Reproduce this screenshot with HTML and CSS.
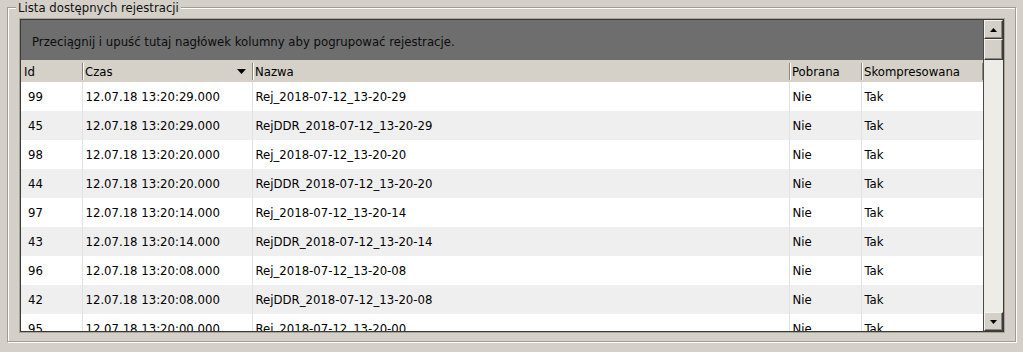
FILE: index.html
```html
<!DOCTYPE html>
<html lang="pl">
<head>
    <meta charset="UTF-8">
    <title>Lista dostępnych rejestracji</title>
    <link rel="stylesheet" href="styles.css">
</head>
<body>
    <fieldset class="recordings">
        <legend>Lista dostępnych rejestracji</legend>
        <div class="grid">
            <div class="grid-main">
                <div class="group-panel">Przeciągnij i upuść tutaj nagłówek kolumny aby pogrupować rejestracje.</div>
                <table class="records">
                    <colgroup>
                        <col class="col-id">
                        <col class="col-time">
                        <col class="col-name">
                        <col class="col-fetched">
                        <col>
                    </colgroup>
                    <thead>
                        <tr>
                            <th>Id</th>
                            <th class="sorted">Czas
                                <svg class="sort-arrow" width="9" height="5" viewBox="0 0 9 5"><path d="M0 0H9L4.5 5Z"/></svg>
                            </th>
                            <th>Nazwa</th>
                            <th>Pobrana</th>
                            <th>Skompresowana</th>
                        </tr>
                    </thead>
                    <tbody>
                        <tr><td class="id">99</td><td>12.07.18 13:20:29.000</td><td>Rej_2018-07-12_13-20-29</td><td>Nie</td><td>Tak</td></tr>
                        <tr><td class="id">45</td><td>12.07.18 13:20:29.000</td><td>RejDDR_2018-07-12_13-20-29</td><td>Nie</td><td>Tak</td></tr>
                        <tr><td class="id">98</td><td>12.07.18 13:20:20.000</td><td>Rej_2018-07-12_13-20-20</td><td>Nie</td><td>Tak</td></tr>
                        <tr><td class="id">44</td><td>12.07.18 13:20:20.000</td><td>RejDDR_2018-07-12_13-20-20</td><td>Nie</td><td>Tak</td></tr>
                        <tr><td class="id">97</td><td>12.07.18 13:20:14.000</td><td>Rej_2018-07-12_13-20-14</td><td>Nie</td><td>Tak</td></tr>
                        <tr><td class="id">43</td><td>12.07.18 13:20:14.000</td><td>RejDDR_2018-07-12_13-20-14</td><td>Nie</td><td>Tak</td></tr>
                        <tr><td class="id">96</td><td>12.07.18 13:20:08.000</td><td>Rej_2018-07-12_13-20-08</td><td>Nie</td><td>Tak</td></tr>
                        <tr><td class="id">42</td><td>12.07.18 13:20:08.000</td><td>RejDDR_2018-07-12_13-20-08</td><td>Nie</td><td>Tak</td></tr>
                        <tr><td class="id">95</td><td>12.07.18 13:20:00.000</td><td>Rej_2018-07-12_13-20-00</td><td>Nie</td><td>Tak</td></tr>
                    </tbody>
                </table>
            </div>
            <div class="scrollbar">
                <div class="scroll-btn">
                    <svg width="7" height="4" viewBox="0 0 7 4"><path d="M0 4H7L3.5 0Z"/></svg>
                </div>
                <div class="scroll-thumb"></div>
                <div class="scroll-track"></div>
                <div class="scroll-btn">
                    <svg width="7" height="4" viewBox="0 0 7 4"><path d="M0 0H7L3.5 4Z"/></svg>
                </div>
            </div>
        </div>
    </fieldset>
</body>
</html>
```

FILE: styles.css
```css
html, body {
    margin: 0;
    height: 352px;
    overflow: hidden;
}
body {
    background: #d4d0c8;
    font-family: "DejaVu Sans Condensed", "DejaVu Sans", sans-serif;
    font-size: 13px;
    color: #000;
}
.recordings {
    margin: 0 7px;
    padding: 4px 11px 9px 12px;
    min-width: 0;
    border: 1px solid #a09d95;
    box-shadow: 1px 1px 0 #fff, inset 1px 1px 0 #fff;
}
.recordings legend {
    margin-left: -4px;
    padding: 0 2px;
    line-height: 15px;
    background: #d4d0c8;
    color: #111;
}
.grid {
    display: flex;
    height: 311px;
    border: 1px solid #3a3a3a;
    box-shadow: 0 0 0 1px #a8a49c;
    background: #fff;
}
.grid-main {
    flex: 1;
    overflow: hidden;
    min-width: 0;
}
.group-panel {
    height: 40px;
    line-height: 44px;
    padding-left: 11px;
    background: #6e6e6e;
    color: #0c0c0c;
    white-space: nowrap;
}
.records {
    width: 100%;
    table-layout: fixed;
    border-collapse: collapse;
}
.col-id { width: 61px; }
.col-time { width: 170px; }
.col-name { width: 537px; }
.col-fetched { width: 72px; }
.records th {
    position: relative;
    height: 22px;
    padding: 0 0 0 3px;
    background: #d5d1c9;
    font-weight: normal;
    text-align: left;
    white-space: nowrap;
}
.records th + th::before,
.records th:last-child::after {
    content: "";
    position: absolute;
    left: 0;
    top: 3px;
    bottom: 2px;
    width: 1px;
    background: #8a877f;
    box-shadow: 1px 0 0 #fff;
}
.records th:last-child::after {
    left: auto;
    right: 0;
}
.sort-arrow {
    position: absolute;
    right: 6px;
    top: 9px;
}
.records td {
    height: 29px;
    padding: 0 0 0 3px;
    border-left: 1px solid #e2e2e2;
    white-space: nowrap;
    overflow: hidden;
}
.records td:first-child {
    border-left: none;
}
.records td.id {
    padding-left: 7px;
}
.records tbody tr:nth-child(even) {
    background: #efefef;
}
.scrollbar {
    width: 19px;
    display: flex;
    flex-direction: column;
    background: #eeece6;
    border-left: 1px solid #4a4a4a;
}
.scroll-btn,
.scroll-thumb {
    height: 19px;
    box-sizing: border-box;
    background: #d4d0c8;
    border: 1px solid;
    border-color: #f4f2ee #3c3c3c #3c3c3c #f4f2ee;
    box-shadow: inset -1px -1px 0 #8c8880;
}
.scroll-btn {
    display: flex;
    align-items: center;
    justify-content: center;
}
.scroll-thumb {
    height: 21px;
}
.scroll-track {
    flex: 1;
}
```
